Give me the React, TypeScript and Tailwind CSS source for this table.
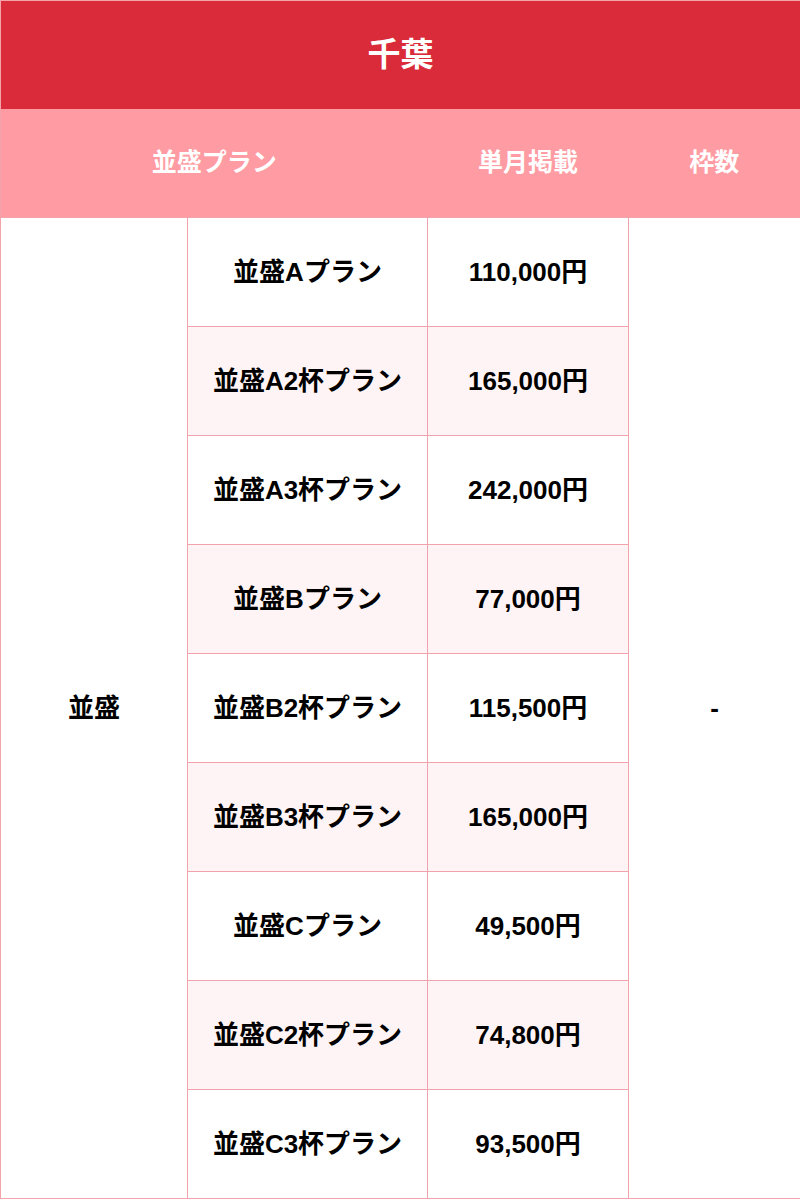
import React from "react";

const rows = [
  ["並盛Aプラン", "110,000円"],
  ["並盛A2杯プラン", "165,000円"],
  ["並盛A3杯プラン", "242,000円"],
  ["並盛Bプラン", "77,000円"],
  ["並盛B2杯プラン", "115,500円"],
  ["並盛B3杯プラン", "165,000円"],
  ["並盛Cプラン", "49,500円"],
  ["並盛C2杯プラン", "74,800円"],
  ["並盛C3杯プラン", "93,500円"],
];

export default function App() {
  return (
    <div
      className="w-[800px] bg-white"
      style={{ fontFamily: '"Liberation Sans", "Noto Sans CJK JP", sans-serif' }}
    >
      <table className="w-[800px] border-collapse table-fixed border border-[#f4a3ab] font-bold">
        <colgroup>
          <col className="w-[187px]" />
          <col className="w-[240px]" />
          <col className="w-[201px]" />
          <col className="w-[172px]" />
        </colgroup>
        <thead>
          <tr className="h-[108px] bg-[#d92b3a]">
            <th colSpan={4} className="text-white text-[33px] leading-none text-center align-middle">
              千葉
            </th>
          </tr>
          <tr className="h-[109px] bg-[#ff9ca3]">
            <th colSpan={2} className="text-white text-[25px] leading-none text-center">
              並盛プラン
            </th>
            <th className="text-white text-[25px] leading-none text-center">単月掲載</th>
            <th className="text-white text-[25px] leading-none text-center">枠数</th>
          </tr>
        </thead>
        <tbody>
          {rows.map(([name, price], i) => (
            <tr
              key={i}
              className={`h-[109px] ${i % 2 === 1 ? "bg-[#fff4f5]" : "bg-white"}`}
            >
              {i === 0 && (
                <td
                  rowSpan={rows.length}
                  className="bg-white text-black text-[26px] leading-none text-center border border-[#f4a3ab]"
                >
                  並盛
                </td>
              )}
              <td className="text-black text-[26px] leading-none text-center border border-[#f0a3ad]">
                {name}
              </td>
              <td className="text-black text-[26px] leading-none text-center border border-[#f0a3ad]">
                {price}
              </td>
              {i === 0 && (
                <td
                  rowSpan={rows.length}
                  className="bg-white text-black text-[26px] leading-none text-center border border-[#f4a3ab]"
                >
                  -
                </td>
              )}
            </tr>
          ))}
        </tbody>
      </table>
    </div>
  );
}
